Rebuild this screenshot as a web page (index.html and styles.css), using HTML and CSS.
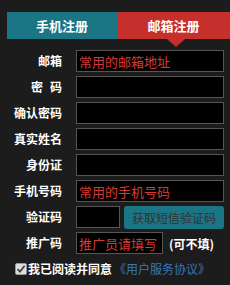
FILE: index.html
```html
<!DOCTYPE html>
<html lang="zh-CN">
<head>
    <meta charset="UTF-8">
    <title>注册</title>
    <link rel="stylesheet" href="styles.css">
</head>
<body>
    <div class="tabs">
        <div class="tab phone">手机注册</div>
        <div class="tab mail active">邮箱注册</div>
    </div>

    <form class="reg-form">
        <div class="row">
            <label>邮箱</label>
            <input type="text" placeholder="常用的邮箱地址">
        </div>
        <div class="row">
            <label><span class="wide">密</span>码</label>
            <input type="password">
        </div>
        <div class="row">
            <label>确认密码</label>
            <input type="password">
        </div>
        <div class="row">
            <label>真实姓名</label>
            <input type="text">
        </div>
        <div class="row">
            <label>身份证</label>
            <input type="text">
        </div>
        <div class="row">
            <label>手机号码</label>
            <input type="text" placeholder="常用的手机号码">
        </div>
        <div class="row">
            <label>验证码</label>
            <input type="text" class="code">
            <button type="button" class="sms-btn">获取短信验证码</button>
        </div>
        <div class="row">
            <label>推广码</label>
            <input type="text" class="promo" placeholder="推广员请填写">
            <span class="note">(可不填)</span>
        </div>
        <div class="agree">
            <span class="check">
                <svg width="10" height="10" viewBox="0 0 10 10"><path d="M1.5 5.2 L4 7.6 L8.6 1.8" fill="none" stroke="#444" stroke-width="1.8"/></svg>
            </span>
            我已阅读并同意<a href="#" class="terms">《用户服务协议》</a>
        </div>
    </form>
</body>
</html>
```

FILE: styles.css
```css
body {
    margin: 0;
    background: #1c1c1c;
    font-family: "Noto Sans CJK SC", "Microsoft YaHei", sans-serif;
    color: #fff;
}
.tabs {
    display: flex;
    margin: 12px 0 0 7px;
    height: 27px;
}
.tab {
    display: flex;
    align-items: center;
    justify-content: center;
    font-size: 13px;
    font-weight: bold;
    color: #fff;
    position: relative;
}
.phone {
    width: 110px;
    background: #1a7585;
}
.mail {
    flex: 1;
    background: #c5302c;
}
.active::after {
    content: "";
    position: absolute;
    left: 50%;
    bottom: -8px;
    margin-left: -7px;
    border-left: 9px solid transparent;
    border-right: 9px solid transparent;
    border-top: 8px solid #c5302c;
}
.reg-form {
    padding-top: 11px;
}
.row {
    display: flex;
    align-items: center;
    height: 22px;
    margin-bottom: 4px;
}
.row label {
    width: 62px;
    text-align: right;
    margin-right: 14px;
    font-size: 12px;
    font-weight: bold;
    line-height: 22px;
}
.wide {
    margin-right: 7px;
}
.row input {
    box-sizing: border-box;
    width: 148px;
    height: 22px;
    background: #000;
    border: 1px solid #555;
    padding: 0 2px;
    font-family: inherit;
    font-size: 13px;
    color: #fff;
    outline: none;
}
.row input::placeholder {
    color: #d63a34;
}
.row input.code {
    width: 44px;
}
.sms-btn {
    margin-left: 4px;
    width: 100px;
    height: 23px;
    background: #1a7585;
    border: none;
    border-radius: 3px;
    color: #333;
    font-family: inherit;
    font-size: 12px;
    padding: 0;
}
.row input.promo {
    width: 87px;
}
.note {
    margin-left: 6px;
    font-size: 12px;
    font-weight: bold;
}
.agree {
    display: flex;
    align-items: center;
    margin: 6px 0 0 15px;
    font-size: 12px;
    font-weight: bold;
}
.check {
    box-sizing: border-box;
    width: 12px;
    height: 12px;
    margin-right: 1px;
    background: #ddd;
    border: 1px solid #999;
    border-radius: 2px;
    display: flex;
    align-items: center;
    justify-content: center;
}
.terms {
    margin-left: 2px;
    color: #3a78b8;
    font-weight: normal;
    text-decoration: none;
}
```
